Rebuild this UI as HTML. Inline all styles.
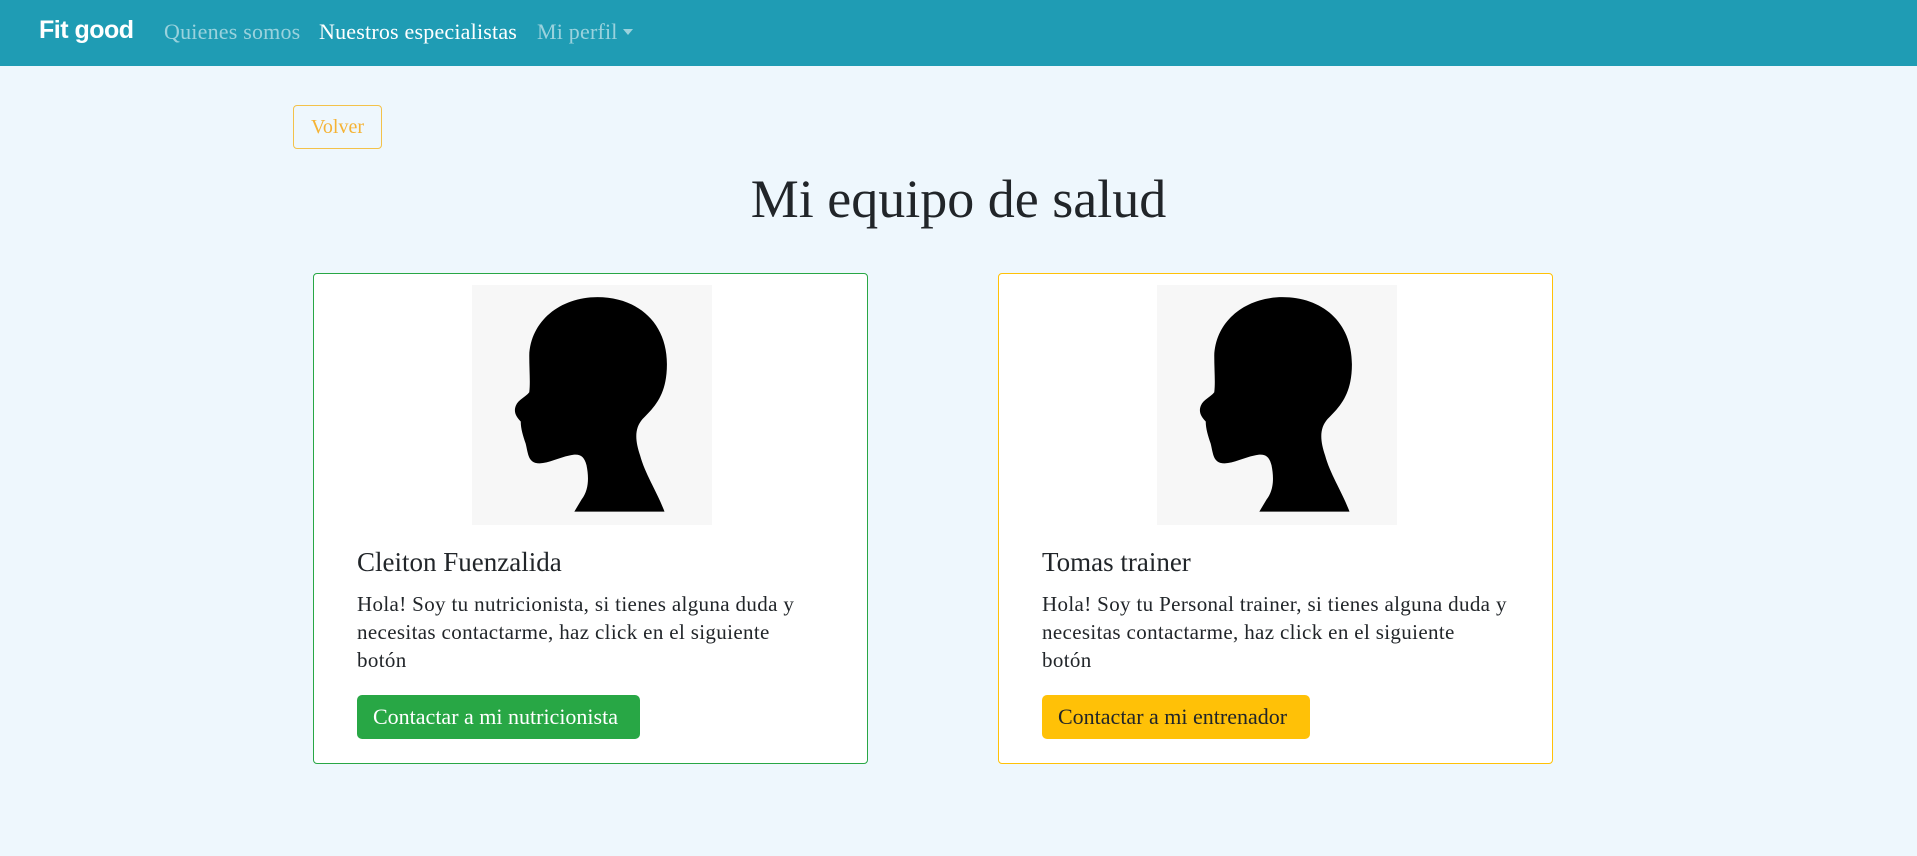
<!DOCTYPE html>
<html><head><meta charset="utf-8"><style>
*{box-sizing:border-box;margin:0;padding:0}
body{width:1917px;height:856px;background:#eef7fd;font-family:"Liberation Serif",serif;color:#212529;position:relative;overflow:hidden}
.nav{position:absolute;left:0;top:0;width:1917px;height:66px;background:#1f9cb4}
.nav span{position:absolute;top:19px;font-size:22px;line-height:26px;white-space:nowrap;letter-spacing:0.2px}
.brand{font-family:"Liberation Sans",sans-serif;font-weight:bold;color:#fff;font-size:25px!important;letter-spacing:-0.5px!important;top:17px!important}
.muted{color:rgba(255,255,255,.55)}
.caret{display:inline-block;width:0;height:0;border-left:5px solid transparent;border-right:5px solid transparent;border-top:6px solid rgba(255,255,255,.55);vertical-align:4px;margin-left:5px}
.volver{position:absolute;left:293px;top:105px;width:89px;height:44px;border:1px solid #f3c24a;border-radius:4px;color:#f5b335;font-size:20px;text-align:center;line-height:42px}
h1{position:absolute;left:0;width:1917px;top:167px;text-align:center;font-weight:normal;font-size:54px;line-height:64px}
.card{position:absolute;top:273px;width:555px;height:491px;background:#fff;border:1px solid #28a745;border-radius:4px}
.img{position:absolute;left:158px;top:11px;width:240px;height:240px;background:#f7f7f7}
.name{position:absolute;left:43px;top:273px;font-size:27px;line-height:30px}
.p{position:absolute;left:43px;width:480px;font-size:21px;line-height:28px;letter-spacing:0.35px}
.btn{position:absolute;left:43px;top:421px;height:44px;border-radius:5px;font-size:22px;line-height:44px;padding:0 16px;white-space:nowrap}
</style></head><body>
<div class="nav">
<span class="brand" style="left:39px">Fit good</span>
<span class="muted" style="left:164px">Quienes somos</span>
<span style="left:319px;color:#fff">Nuestros especialistas</span>
<span class="muted" style="left:537px">Mi perfil<i class="caret"></i></span>
</div>
<div class="volver">Volver</div>
<h1>Mi equipo de salud</h1>

<div class="card" style="left:313px">
<div class="img"><svg width="240" height="240" viewBox="0 0 197 197"><path d="M103 10 C135 10 160 30 160 65 C160 90 150 100 140 110 C133 118 134 128 138 140 C142 155 152 170 158 186 L84 186 L90 176 C96 168 96 158 94 148 C92 140 88 138 80 140 C70 142 60 148 52 146 C46 144 46 138 44 130 C42 124 40 118 40 112 C36 108 34 104 36 99 C38 94 44 92 47 88 C48 80 47 70 47 58 C48 30 72 10 103 10 Z" fill="#000"/></svg></div>
<div class="name">Cleiton Fuenzalida</div>
<div class="p" style="top:316px">Hola! Soy tu nutricionista, si tienes alguna duda y<br>necesitas contactarme, haz click en el siguiente<br>botón</div>
<div class="btn" style="background:#28a745;color:#fff;width:283px">Contactar a mi nutricionista</div>
</div>

<div class="card" style="left:998px;border-color:#ffc107">
<div class="img"><svg width="240" height="240" viewBox="0 0 197 197"><path d="M103 10 C135 10 160 30 160 65 C160 90 150 100 140 110 C133 118 134 128 138 140 C142 155 152 170 158 186 L84 186 L90 176 C96 168 96 158 94 148 C92 140 88 138 80 140 C70 142 60 148 52 146 C46 144 46 138 44 130 C42 124 40 118 40 112 C36 108 34 104 36 99 C38 94 44 92 47 88 C48 80 47 70 47 58 C48 30 72 10 103 10 Z" fill="#000"/></svg></div>
<div class="name">Tomas trainer</div>
<div class="p" style="top:316px;white-space:nowrap">Hola! Soy tu Personal trainer, si tienes alguna duda y<br>necesitas contactarme, haz click en el siguiente<br>botón</div>
<div class="btn" style="background:#ffc107;color:#212529;width:268px">Contactar a mi entrenador</div>
</div>
</body></html>
